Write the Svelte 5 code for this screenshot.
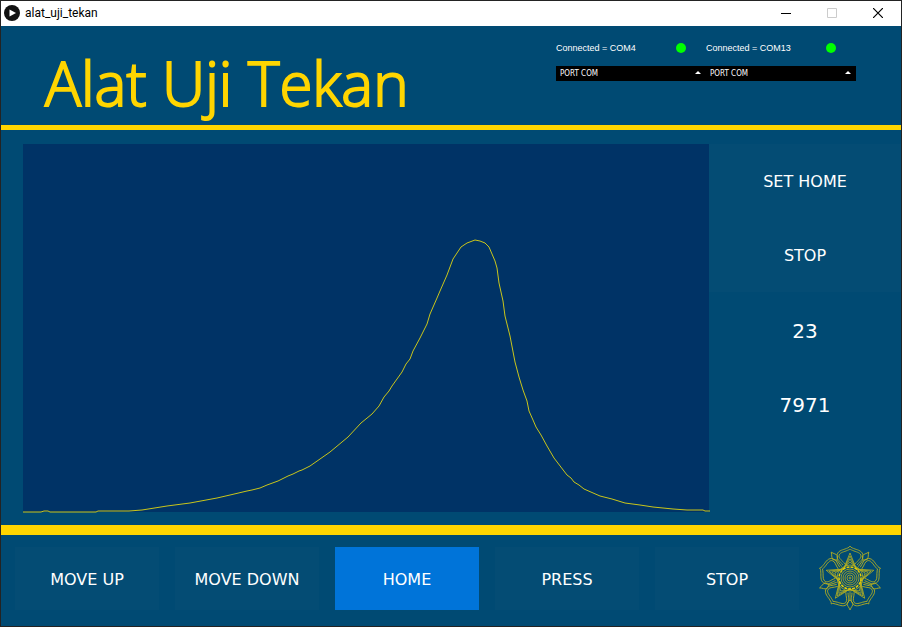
<script>
  const actions = ['MOVE UP', 'MOVE DOWN', 'HOME', 'PRESS', 'STOP'];
  let active = $state('HOME');

  const ports = [
    { id: 'port-a', status: 'Connected = COM4' },
    { id: 'port-b', status: 'Connected = COM13' }
  ];

  const curve = [
    [0, 368], [18, 368], [21, 367], [25, 367], [27, 368], [73, 368], [75, 367], [106, 367],
    [119, 366], [144, 362], [167, 359], [194, 354], [207, 351], [224, 347], [229, 346],
    [237, 344], [244, 341], [255, 337], [265, 332], [270, 330], [276, 327], [279, 326],
    [287, 322], [307, 308], [325, 293], [338, 279], [349, 270], [356, 262], [361, 253],
    [366, 247], [369, 242], [379, 228], [383, 220], [387, 215], [390, 207], [397, 194],
    [404, 180], [407, 170], [414, 154], [417, 147], [424, 131], [430, 115], [438, 103],
    [444, 99], [452, 96], [457, 97], [462, 99], [466, 103], [472, 117], [474, 124],
    [476, 139], [480, 157], [482, 172], [487, 192], [492, 218], [496, 233], [500, 246],
    [504, 257], [506, 267], [510, 276], [513, 283], [518, 291], [524, 302], [531, 314],
    [544, 331], [548, 334], [551, 338], [556, 341], [561, 345], [577, 352], [589, 355],
    [602, 359], [617, 361], [630, 363], [650, 365], [664, 366], [680, 366], [682, 367], [687, 367]
  ];
  const points = curve.map((p) => p.join(',')).join(' ');

  function star(outer, inner) {
    return Array.from({ length: 10 }, (_, i) => {
      const r = i % 2 ? inner : outer;
      const a = (i * Math.PI) / 5;
      return `${(r * Math.sin(a)).toFixed(2)},${(-r * Math.cos(a)).toFixed(2)}`;
    }).join(' ');
  }
  const turns = [0, 72, 144, 216, 288];
</script>

<div class="window">
  <div class="titlebar">
    <svg class="app-icon" width="16" height="16" viewBox="0 0 16 16" aria-hidden="true">
      <circle cx="8" cy="8" r="8" fill="#111" />
      <path d="M5.500 4.500 12 8l-6.500 3.500z" fill="#fff" />
    </svg>
    <span class="name">alat_uji_tekan</span>
    <button aria-label="Minimize"><svg width="10" height="10" viewBox="0 0 10 10" shape-rendering="crispEdges"><path d="M0 5.500h10" stroke="#000" /></svg></button>
    <button aria-label="Maximize" disabled><svg width="10" height="10" viewBox="0 0 10 10"><path d="M.5.5h9v9h-9z" stroke="#ccc" fill="none" /></svg></button>
    <button aria-label="Close"><svg width="10" height="10" viewBox="0 0 10 10"><path d="M0 0l10 10M10 0L0 10" stroke="#000" stroke-width="1.200" /></svg></button>
  </div>

  <header>
    <h1>Alat Uji Tekan</h1>
    <div class="ports">
      {#each ports as port}
        <div class="port">
          <label for={port.id}>{port.status}<i class="led"></i></label>
          <div class="drop">
            <select id={port.id}><option>PORT COM</option></select>
            <svg width="6" height="3" viewBox="0 0 6 3" aria-hidden="true"><path d="M0 3 3 0l3 3z" fill="#fff" /></svg>
          </div>
        </div>
      {/each}
    </div>
  </header>

  <main>
    <svg class="chart" viewBox="0 0 686 368" preserveAspectRatio="none" role="img" aria-label="Kurva tekan">
      <polyline {points} />
    </svg>
    <aside>
      <button>SET HOME</button>
      <button>STOP</button>
      <output>23</output>
      <output>7971</output>
    </aside>
  </main>

  <footer>
    {#each actions as action}
      <button class:active={active === action} onclick={() => (active = action)}>{action}</button>
    {/each}
    <svg class="logo" width="64" height="66" viewBox="-32 -33 64 66" aria-hidden="true">
      {#each turns as t}
        <g transform="rotate({t})">
          <path d="M-7-13C-10-17-13-18-13-22C-13-27-8-28-5-29C-3-30-1-30 0-32C1-30 3-30 5-29C8-28 13-27 13-22C13-18 10-17 7-13" />
          <path d="M-5-14C-8-18-11-19-11-22C-11-25-7-26-4-27C-2-28-1-28 0-29C1-28 2-28 4-27C7-26 11-25 11-22C11-19 8-18 5-14" />
          <path transform="rotate(36)" d="M-3-25C-3-28-1-29 0-32C1-29 3-28 3-25M-3-25L0-22L3-25M0-22V-14" />
        </g>
      {/each}
      <polygon points={star(25, 11)} />
      <polygon points={star(22, 11)} />
      <polygon points={star(19, 11)} />
      <polygon points={star(16, 12)} />
      <circle r="13" />
      <circle r="11" class="bright" />
      <circle r="9" />
      <circle r="7" />
      <circle r="5" />
      <circle r="3" />
      <circle r="1" />
    </svg>
  </footer>
</div>

<style>
  :global(body) {
    margin: 0;
  }
  .window {
    box-sizing: border-box;
    min-height: 100vh;
    display: flex;
    flex-direction: column;
    border: 1px solid #232323;
    background: #004a73;
    color: #fff;
    font-family: 'DejaVu Sans', Verdana, sans-serif;
  }
  button {
    border: 0;
    padding: 0;
    background: #044c74;
    color: inherit;
    font: inherit;
  }
  .titlebar {
    display: flex;
    align-items: center;
    height: 24px;
    padding: 0 0 1px 3px;
    background: #fff;
    color: #000;
    font: 12px/24px Roboto, 'Segoe UI', sans-serif;
  }
  .name {
    flex: 1;
    margin-left: 5px;
  }
  .titlebar button {
    display: flex;
    align-items: center;
    justify-content: center;
    width: 46px;
    height: 24px;
    background: none;
  }
  header {
    display: flex;
    justify-content: space-between;
    height: 99px;
    padding: 0 45px 0 44px;
    border-bottom: 5px solid #ffd500;
  }
  h1 {
    margin: 0;
    padding-top: 16px;
    color: #ffd500;
    font: 300 60px/82px 'Open Sans', sans-serif;
    -webkit-text-stroke: 2px #ffd500;
    white-space: nowrap;
  }
  .ports {
    display: flex;
    padding-top: 15px;
  }
  .port {
    width: 150px;
  }
  label {
    display: flex;
    align-items: center;
    justify-content: space-between;
    margin-bottom: 11px;
    padding-right: 20px;
    font: 9px/14px 'Liberation Sans', Arial, sans-serif;
  }
  .led {
    width: 10px;
    height: 10px;
    border-radius: 50%;
    background: #0f0;
  }
  .drop {
    position: relative;
  }
  select {
    display: block;
    appearance: none;
    width: 100%;
    height: 15px;
    padding: 0 4px;
    border: 0;
    border-radius: 0;
    background: #000;
    color: #fff;
    font: 8px/15px 'DejaVu Sans Condensed', 'Liberation Sans', sans-serif;
  }
  .drop svg {
    position: absolute;
    right: 5px;
    top: 5px;
    pointer-events: none;
  }
  main {
    flex: 1;
    display: flex;
    padding: 14px 0 13px 22px;
    border-bottom: 10px solid #ffd500;
  }
  .chart {
    flex: 1;
    min-width: 0;
    height: 368px;
    background: #003366;
    overflow: visible;
  }
  polyline {
    fill: none;
    stroke: #c9c51b;
    stroke-width: 1;
    vector-effect: non-scaling-stroke;
  }
  aside {
    display: flex;
    flex-direction: column;
    width: 192px;
  }
  aside button,
  output {
    height: 74px;
    text-align: center;
    font-size: 16px;
  }
  output {
    font-size: 20px;
    line-height: 78px;
  }
  footer {
    display: flex;
    gap: 16px;
    padding: 12px 19px 16px 14px;
  }
  footer button {
    flex: 1 1 0;
    min-width: 0;
    height: 63px;
    padding-top: 2px;
    font-size: 16px;
  }
  footer .active {
    background: #0074d9;
  }
  .logo {
    flex: none;
    margin: -2px 0 -1px 3px;
    fill: none;
    stroke: #b9b21f;
    stroke-width: 0.8;
  }
  .bright {
    stroke: #e8d000;
    stroke-width: 1.5;
    stroke-dasharray: 3 1;
  }
</style>
